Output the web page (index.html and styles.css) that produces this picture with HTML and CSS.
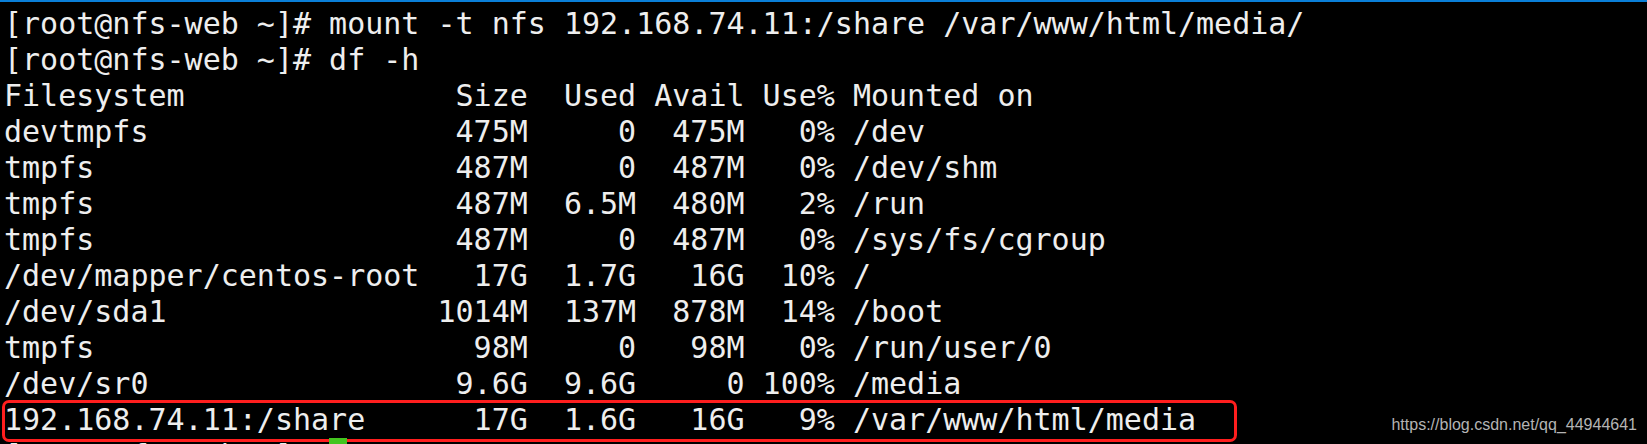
FILE: index.html
```html
<!DOCTYPE html>
<html>
<head>
<meta charset="utf-8">
<link rel="stylesheet" href="styles.css">
</head>
<body>
<div class="screen">
  <div class="term">
    <div class="line">[root@nfs-web ~]# mount -t nfs 192.168.74.11:/share /var/www/html/media/</div>
    <div class="line">[root@nfs-web ~]# df -h</div>
    <div class="line">Filesystem               Size  Used Avail Use% Mounted on</div>
    <div class="line">devtmpfs                 475M     0  475M   0% /dev</div>
    <div class="line">tmpfs                    487M     0  487M   0% /dev/shm</div>
    <div class="line">tmpfs                    487M  6.5M  480M   2% /run</div>
    <div class="line">tmpfs                    487M     0  487M   0% /sys/fs/cgroup</div>
    <div class="line">/dev/mapper/centos-root   17G  1.7G   16G  10% /</div>
    <div class="line">/dev/sda1               1014M  137M  878M  14% /boot</div>
    <div class="line">tmpfs                     98M     0   98M   0% /run/user/0</div>
    <div class="line">/dev/sr0                 9.6G  9.6G     0 100% /media</div>
    <div class="line marked">192.168.74.11:/share      17G  1.6G   16G   9% /var/www/html/media</div>
    <div class="line">[root@nfs-web ~]# <span class="cursor"> </span></div>
  </div>
  <div class="watermark">https://blog.csdn.net/qq_44944641</div>
</div>
</body>
</html>
```
FILE: styles.css
```css
html, body {
  margin: 0;
  padding: 0;
  background: #000;
}

.screen {
  position: relative;
  width: 1647px;
  height: 444px;
  overflow: hidden;
  background: #000;
  border-top: 2px solid #0a7fd8;
  box-sizing: border-box;
}

.term {
  padding: 4px 0 0 4px;
  font-family: "DejaVu Sans Mono", monospace;
  font-size: 30px;
  line-height: 36px;
  color: #eeeeee;
}

.line {
  white-space: pre;
  height: 36px;
}

.marked {
  position: relative;
}

.marked::before {
  content: "";
  position: absolute;
  left: -2px;
  top: -2px;
  width: 1235px;
  height: 42px;
  border: 3px solid #ff1e1e;
  border-radius: 7px;
  box-sizing: border-box;
}

.cursor {
  position: relative;
  z-index: 2;
  display: inline-block;
  width: 18px;
  height: 36px;
  vertical-align: top;
  background: #43c51f;
}

.watermark {
  position: absolute;
  right: 10px;
  top: 414px;
  font-family: "Liberation Sans", Arial, sans-serif;
  font-size: 16px;
  line-height: 18px;
  color: #b4b4b4;
}
```
